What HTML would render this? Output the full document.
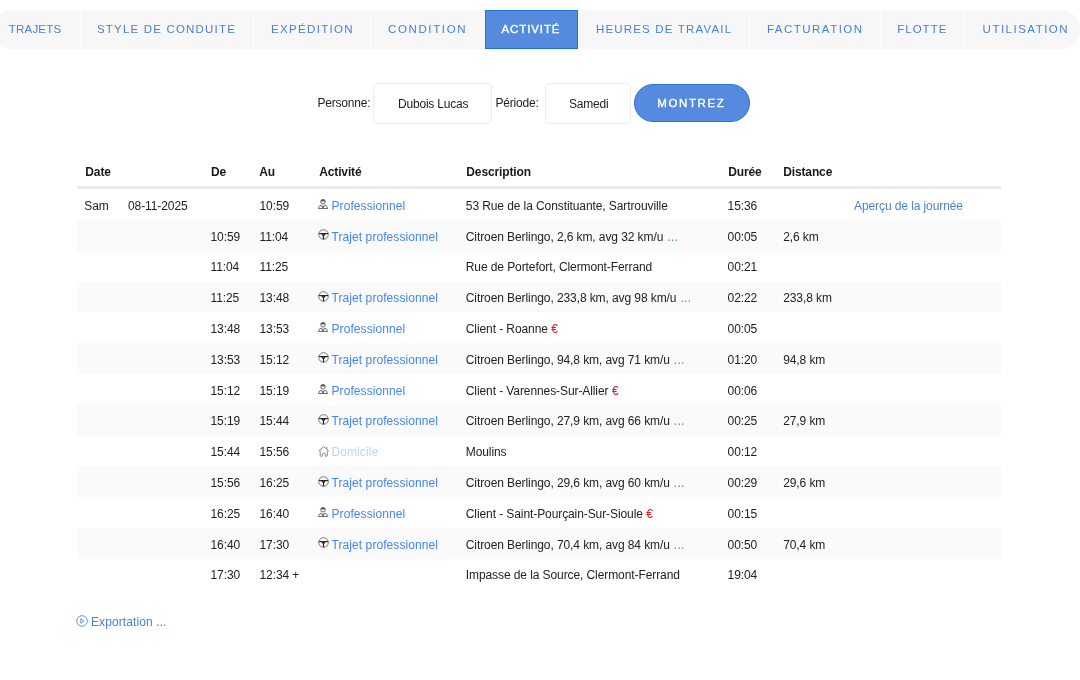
<!DOCTYPE html>
<html><head><meta charset="utf-8">
<style>
* { margin:0; padding:0; box-sizing:border-box; }
html, body { width:1080px; height:680px; overflow:hidden; background:#fff; font-family:"Liberation Sans", sans-serif; color:#333; position:relative; }
.tabbar { position:absolute; left:-8px; top:10px; width:1088px; height:39px; background:#f7f7f7; border-radius:19px; }
.tab { position:absolute; top:21.2px; line-height:16px; font-size:11.5px; color:#4a80d4; white-space:nowrap; }
.sep { position:absolute; top:10px; width:1px; height:39px; background:#fff; }
.active { position:absolute; top:10px; height:39px; background:#558ade; }
.lbl { position:absolute; font-size:12px; color:#222; line-height:16px; white-space:nowrap; }
.inp { position:absolute; top:83px; height:41px; border:1px solid #ededed; border-radius:4px; background:#fff; }
.btn { position:absolute; left:634px; top:83.5px; width:115.6px; height:38px; border-radius:19px; background:#558ade; }
.btxt { position:absolute; color:#fff; font-size:11.5px; font-weight:bold; line-height:16px; white-space:nowrap; }
.hdr { position:absolute; left:77px; top:155px; width:924px; height:34.2px; border-bottom:3px solid #ebebeb; }
.hdr span { position:absolute; top:0; line-height:16px; font-size:12px; font-weight:bold; color:#1a1a1a; white-space:nowrap; letter-spacing:-0.13px; }
.row { position:absolute; left:77px; width:924.4px; height:30.8px; }
.c { position:absolute; top:8.5px; line-height:16px; font-size:12px; white-space:nowrap; color:#222; letter-spacing:-0.09px; }
.ic { position:absolute; top:10px; line-height:0; }
.lk { color:#4285f4; }
.lk.home { color:#b9d4f8; }
.lk2 { color:#4a80d4; }
.dots { color:#4285f4; margin-left:4px; letter-spacing:0.3px; }
.euro { color:#e3161b; font-weight:bold; margin-left:3.5px; }
.exp { position:absolute; left:91px; top:614px; font-size:12px; color:#4a80d4; line-height:16px; white-space:nowrap; letter-spacing:-0.09px; }
#root { position:absolute; left:0; top:0; width:1080px; height:680px; background:#fff; will-change:transform; overflow:hidden; }
.lbl{letter-spacing:-0.2px} .hdr span{top:9px} .active{border:1px solid #1d74d8} .euro{font-weight:normal} .lk{letter-spacing:0.08px} .btxt{font-weight:normal;-webkit-text-stroke:0.35px #fff;font-size:11.5px} .btn{border:1px solid #2a76d8} .exp{letter-spacing:0.1px} .sep{background:#fdfdfd}
</style></head><body>
<div id="root">
<div class="tabbar"></div>
<div class="active" style="left:485px;width:93px"></div>
<div class="sep" style="left:80.2px"></div><div class="sep" style="left:253px"></div><div class="sep" style="left:369.8px"></div><div class="sep" style="left:749.1px"></div><div class="sep" style="left:879.7px"></div><div class="sep" style="left:964px"></div>
<div class="tab" style="left:8.8px;letter-spacing:0.2px;">TRAJETS</div>
<div class="tab" style="left:97.0px;letter-spacing:1.188px;">STYLE DE CONDUITE</div>
<div class="tab" style="left:271.0px;letter-spacing:1.333px;">EXPÉDITION</div>
<div class="tab" style="left:388.0px;letter-spacing:1.625px;">CONDITION</div>
<div class="tab" style="left:501.5px;letter-spacing:0.893px;color:#fff;font-weight:normal;-webkit-text-stroke:0.35px #fff;">ACTIVITÉ</div>
<div class="tab" style="left:596.0px;letter-spacing:1.172px;">HEURES DE TRAVAIL</div>
<div class="tab" style="left:767.0px;letter-spacing:1.475px;">FACTURATION</div>
<div class="tab" style="left:897.2px;letter-spacing:1.02px;">FLOTTE</div>
<div class="tab" style="left:982.6px;letter-spacing:1.49px;">UTILISATION</div>
<div class="lbl" style="left:317.5px;top:95.3px">Personne:</div>
<div class="inp" style="left:373px;width:119px"></div>
<div class="lbl" style="left:398px;top:96.3px">Dubois Lucas</div>
<div class="lbl" style="left:495.5px;top:95.4px">Période:</div>
<div class="inp" style="left:545px;width:86px"></div>
<div class="lbl" style="left:569px;top:96.4px">Samedi</div>
<div class="btn"></div>
<div class="btxt" style="left:657.2px;top:95.0px;letter-spacing:1.62px">MONTREZ</div>
<div class="hdr">
  <span style="left:8.299999999999997px">Date</span>
  <span style="left:133.9px">De</span>
  <span style="left:182.3px">Au</span>
  <span style="left:242.2px">Activité</span>
  <span style="left:389.3px">Description</span>
  <span style="left:651.3px">Durée</span>
  <span style="left:706.2px">Distance</span>
</div>
<div class="row" style="top:189.20px;background:#fff"><span class="c" style="left:7.299999999999997px;">Sam</span><span class="c" style="left:51px;">08-11-2025</span><span class="c" style="left:182.5px;">10:59</span><span class="ic" style="left:241px;"><svg width="10" height="10" viewBox="0 0 10 10"><g fill="none" stroke="#5a5a5a" stroke-width="0.9"><circle cx="5" cy="2.7" r="2.3"/><path d="M0.5 9.5 Q0.5 6.7 3.2 6.2 L5 9 L6.8 6.2 Q9.5 6.7 9.5 9.5 Z"/></g><path d="M2.7 2.4 Q2.9 0.4 5 0.4 Q7.1 0.4 7.3 2.4 Z" fill="#5a5a5a"/><path d="M4.55 6.4 H5.45 L5.6 7.4 L5 9.2 L4.4 7.4 Z" fill="#5a5a5a"/></svg></span><span class="c lk" style="left:254.5px;">Professionnel</span><span class="c" style="left:388.8px;">53 Rue de la Constituante, Sartrouville</span><span class="c" style="left:650.6px;">15:36</span><span class="c lk2" style="left:777px;">Aperçu de la journée</span></div>
<div class="row" style="top:220.00px;background:#fafafa"><span class="c" style="left:133.5px;">10:59</span><span class="c" style="left:182.5px;">11:04</span><span class="ic" style="left:241px;"><svg style="position:relative;top:-0.8px" width="11" height="11" viewBox="0 0 11 11"><circle cx="5.5" cy="5.5" r="4.8" fill="none" stroke="#777" stroke-width="1"/><path d="M0.8 4.6 H10.2" stroke="#222" stroke-width="1.1"/><path d="M2.8 4.6 H8.2 L6.1 7 V10.3 H4.9 V7 Z" fill="#222"/><circle cx="5.5" cy="5.6" r="0.45" fill="#aaa"/></svg></span><span class="c lk" style="left:254.5px;">Trajet professionnel</span><span class="c" style="left:388.8px;">Citroen Berlingo, 2,6 km, avg 32 km/u<span class="dots">...</span></span><span class="c" style="left:650.6px;">00:05</span><span class="c" style="left:706.2px;">2,6 km</span></div>
<div class="row" style="top:250.80px;background:#fff"><span class="c" style="left:133.5px;">11:04</span><span class="c" style="left:182.5px;">11:25</span><span class="c" style="left:388.8px;">Rue de Portefort, Clermont-Ferrand</span><span class="c" style="left:650.6px;">00:21</span></div>
<div class="row" style="top:281.60px;background:#fafafa"><span class="c" style="left:133.5px;">11:25</span><span class="c" style="left:182.5px;">13:48</span><span class="ic" style="left:241px;"><svg style="position:relative;top:-0.8px" width="11" height="11" viewBox="0 0 11 11"><circle cx="5.5" cy="5.5" r="4.8" fill="none" stroke="#777" stroke-width="1"/><path d="M0.8 4.6 H10.2" stroke="#222" stroke-width="1.1"/><path d="M2.8 4.6 H8.2 L6.1 7 V10.3 H4.9 V7 Z" fill="#222"/><circle cx="5.5" cy="5.6" r="0.45" fill="#aaa"/></svg></span><span class="c lk" style="left:254.5px;">Trajet professionnel</span><span class="c" style="left:388.8px;">Citroen Berlingo, 233,8 km, avg 98 km/u<span class="dots">...</span></span><span class="c" style="left:650.6px;">02:22</span><span class="c" style="left:706.2px;">233,8 km</span></div>
<div class="row" style="top:312.40px;background:#fff"><span class="c" style="left:133.5px;">13:48</span><span class="c" style="left:182.5px;">13:53</span><span class="ic" style="left:241px;"><svg width="10" height="10" viewBox="0 0 10 10"><g fill="none" stroke="#5a5a5a" stroke-width="0.9"><circle cx="5" cy="2.7" r="2.3"/><path d="M0.5 9.5 Q0.5 6.7 3.2 6.2 L5 9 L6.8 6.2 Q9.5 6.7 9.5 9.5 Z"/></g><path d="M2.7 2.4 Q2.9 0.4 5 0.4 Q7.1 0.4 7.3 2.4 Z" fill="#5a5a5a"/><path d="M4.55 6.4 H5.45 L5.6 7.4 L5 9.2 L4.4 7.4 Z" fill="#5a5a5a"/></svg></span><span class="c lk" style="left:254.5px;">Professionnel</span><span class="c" style="left:388.8px;">Client - Roanne<span class="euro">€</span></span><span class="c" style="left:650.6px;">00:05</span></div>
<div class="row" style="top:343.20px;background:#fafafa"><span class="c" style="left:133.5px;">13:53</span><span class="c" style="left:182.5px;">15:12</span><span class="ic" style="left:241px;"><svg style="position:relative;top:-0.8px" width="11" height="11" viewBox="0 0 11 11"><circle cx="5.5" cy="5.5" r="4.8" fill="none" stroke="#777" stroke-width="1"/><path d="M0.8 4.6 H10.2" stroke="#222" stroke-width="1.1"/><path d="M2.8 4.6 H8.2 L6.1 7 V10.3 H4.9 V7 Z" fill="#222"/><circle cx="5.5" cy="5.6" r="0.45" fill="#aaa"/></svg></span><span class="c lk" style="left:254.5px;">Trajet professionnel</span><span class="c" style="left:388.8px;">Citroen Berlingo, 94,8 km, avg 71 km/u<span class="dots">...</span></span><span class="c" style="left:650.6px;">01:20</span><span class="c" style="left:706.2px;">94,8 km</span></div>
<div class="row" style="top:374.00px;background:#fff"><span class="c" style="left:133.5px;">15:12</span><span class="c" style="left:182.5px;">15:19</span><span class="ic" style="left:241px;"><svg width="10" height="10" viewBox="0 0 10 10"><g fill="none" stroke="#5a5a5a" stroke-width="0.9"><circle cx="5" cy="2.7" r="2.3"/><path d="M0.5 9.5 Q0.5 6.7 3.2 6.2 L5 9 L6.8 6.2 Q9.5 6.7 9.5 9.5 Z"/></g><path d="M2.7 2.4 Q2.9 0.4 5 0.4 Q7.1 0.4 7.3 2.4 Z" fill="#5a5a5a"/><path d="M4.55 6.4 H5.45 L5.6 7.4 L5 9.2 L4.4 7.4 Z" fill="#5a5a5a"/></svg></span><span class="c lk" style="left:254.5px;">Professionnel</span><span class="c" style="left:388.8px;">Client - Varennes-Sur-Allier<span class="euro">€</span></span><span class="c" style="left:650.6px;">00:06</span></div>
<div class="row" style="top:404.80px;background:#fafafa"><span class="c" style="left:133.5px;">15:19</span><span class="c" style="left:182.5px;">15:44</span><span class="ic" style="left:241px;"><svg style="position:relative;top:-0.8px" width="11" height="11" viewBox="0 0 11 11"><circle cx="5.5" cy="5.5" r="4.8" fill="none" stroke="#777" stroke-width="1"/><path d="M0.8 4.6 H10.2" stroke="#222" stroke-width="1.1"/><path d="M2.8 4.6 H8.2 L6.1 7 V10.3 H4.9 V7 Z" fill="#222"/><circle cx="5.5" cy="5.6" r="0.45" fill="#aaa"/></svg></span><span class="c lk" style="left:254.5px;">Trajet professionnel</span><span class="c" style="left:388.8px;">Citroen Berlingo, 27,9 km, avg 66 km/u<span class="dots">...</span></span><span class="c" style="left:650.6px;">00:25</span><span class="c" style="left:706.2px;">27,9 km</span></div>
<div class="row" style="top:435.60px;background:#fff"><span class="c" style="left:133.5px;">15:44</span><span class="c" style="left:182.5px;">15:56</span><span class="ic" style="left:241px;"><svg width="12" height="11" viewBox="0 0 12 11"><g fill="none" stroke="#888" stroke-width="1"><path d="M0.6 5.2 L5.75 0.6 L10.9 5.2"/><path d="M2.2 4.6 V9.6 Q2.2 10.2 2.8 10.2 H4.3 V8.1 Q4.3 7.1 5.75 7.1 Q7.2 7.1 7.2 8.1 V10.2 H8.7 Q9.3 10.2 9.3 9.6 V4.6"/></g><path d="M8 1.2 H9.3 V3.6 L8 2.4 Z" fill="#888"/></svg></span><span class="c lk home" style="left:254.5px;">Domicile</span><span class="c" style="left:388.8px;">Moulins</span><span class="c" style="left:650.6px;">00:12</span></div>
<div class="row" style="top:466.40px;background:#fafafa"><span class="c" style="left:133.5px;">15:56</span><span class="c" style="left:182.5px;">16:25</span><span class="ic" style="left:241px;"><svg style="position:relative;top:-0.8px" width="11" height="11" viewBox="0 0 11 11"><circle cx="5.5" cy="5.5" r="4.8" fill="none" stroke="#777" stroke-width="1"/><path d="M0.8 4.6 H10.2" stroke="#222" stroke-width="1.1"/><path d="M2.8 4.6 H8.2 L6.1 7 V10.3 H4.9 V7 Z" fill="#222"/><circle cx="5.5" cy="5.6" r="0.45" fill="#aaa"/></svg></span><span class="c lk" style="left:254.5px;">Trajet professionnel</span><span class="c" style="left:388.8px;">Citroen Berlingo, 29,6 km, avg 60 km/u<span class="dots">...</span></span><span class="c" style="left:650.6px;">00:29</span><span class="c" style="left:706.2px;">29,6 km</span></div>
<div class="row" style="top:497.20px;background:#fff"><span class="c" style="left:133.5px;">16:25</span><span class="c" style="left:182.5px;">16:40</span><span class="ic" style="left:241px;"><svg width="10" height="10" viewBox="0 0 10 10"><g fill="none" stroke="#5a5a5a" stroke-width="0.9"><circle cx="5" cy="2.7" r="2.3"/><path d="M0.5 9.5 Q0.5 6.7 3.2 6.2 L5 9 L6.8 6.2 Q9.5 6.7 9.5 9.5 Z"/></g><path d="M2.7 2.4 Q2.9 0.4 5 0.4 Q7.1 0.4 7.3 2.4 Z" fill="#5a5a5a"/><path d="M4.55 6.4 H5.45 L5.6 7.4 L5 9.2 L4.4 7.4 Z" fill="#5a5a5a"/></svg></span><span class="c lk" style="left:254.5px;">Professionnel</span><span class="c" style="left:388.8px;">Client - Saint-Pourçain-Sur-Sioule<span class="euro">€</span></span><span class="c" style="left:650.6px;">00:15</span></div>
<div class="row" style="top:528.00px;background:#fafafa"><span class="c" style="left:133.5px;">16:40</span><span class="c" style="left:182.5px;">17:30</span><span class="ic" style="left:241px;"><svg style="position:relative;top:-0.8px" width="11" height="11" viewBox="0 0 11 11"><circle cx="5.5" cy="5.5" r="4.8" fill="none" stroke="#777" stroke-width="1"/><path d="M0.8 4.6 H10.2" stroke="#222" stroke-width="1.1"/><path d="M2.8 4.6 H8.2 L6.1 7 V10.3 H4.9 V7 Z" fill="#222"/><circle cx="5.5" cy="5.6" r="0.45" fill="#aaa"/></svg></span><span class="c lk" style="left:254.5px;">Trajet professionnel</span><span class="c" style="left:388.8px;">Citroen Berlingo, 70,4 km, avg 84 km/u<span class="dots">...</span></span><span class="c" style="left:650.6px;">00:50</span><span class="c" style="left:706.2px;">70,4 km</span></div>
<div class="row" style="top:558.80px;background:#fff"><span class="c" style="left:133.5px;">17:30</span><span class="c" style="left:182.5px;">12:34 +</span><span class="c" style="left:388.8px;">Impasse de la Source, Clermont-Ferrand</span><span class="c" style="left:650.6px;">19:04</span></div>
<div class="exp">Exportation ...</div>
<svg width="12" height="12" viewBox="0 0 12 12" style="position:absolute;left:76.3px;top:615.2px"><circle cx="6" cy="6" r="5.3" fill="none" stroke="#4a80d4" stroke-width="0.85"/><path d="M4.8 3.7 L7.9 6 L4.8 8.3 Z" fill="none" stroke="#4a80d4" stroke-width="0.85" stroke-linejoin="round"/></svg>
</div>
</body></html>
